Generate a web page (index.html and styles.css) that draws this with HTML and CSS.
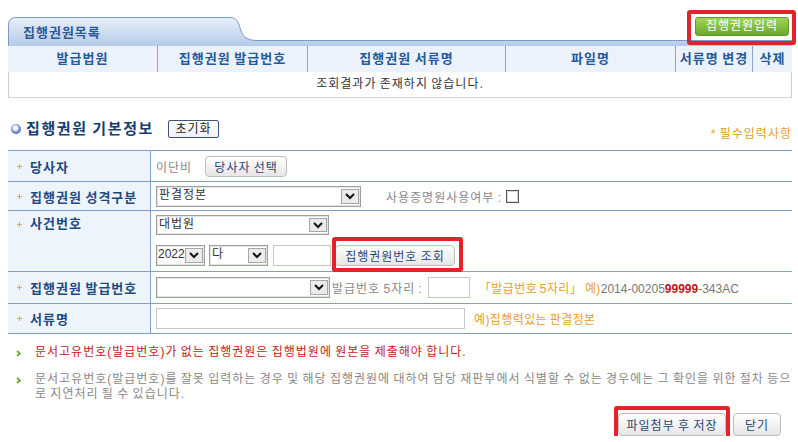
FILE: index.html
```html
<!DOCTYPE html>
<html lang="ko">
<head>
  <meta charset="UTF-8">
  <title>집행권원 입력</title>
  <link rel="stylesheet" href="styles.css">
</head>
<body>

<div class="page">

  <!-- 집행권원 목록 -->
  <div class="list-top">
    <svg class="tab-bg" width="784" height="29" viewBox="0 0 784 29">
      <defs>
        <linearGradient id="tabFill" x1="0" y1="0" x2="0" y2="1">
          <stop offset="0" stop-color="#e9f0f9"/>
          <stop offset="1" stop-color="#b4cbe8"/>
        </linearGradient>
        <linearGradient id="bandFill" x1="0" y1="0" x2="0" y2="1">
          <stop offset="0" stop-color="#a6c0e3"/>
          <stop offset="1" stop-color="#c6d8ef"/>
        </linearGradient>
      </defs>
      <rect x="0" y="23" width="784" height="6" fill="url(#bandFill)"/>
      <path d="M0.5,29 V8 Q0.5,0.5 8,0.5 H222 C230,0.5 231,8 233,14 C236,21 240,23.5 250,23.5 H784 V29 Z" fill="url(#tabFill)"/>
      <path d="M0.5,29 V8 Q0.5,0.5 8,0.5 H222 C230,0.5 231,8 233,14 C236,21 240,23.5 250,23.5 H784" fill="none" stroke="#7a9bc8"/>
    </svg>
    <h2 class="tab-title">집행권원목록</h2>
    <button class="btn-green mark">집행권원입력</button>
  </div>

  <div class="list-grid">
    <div class="th">발급법원</div>
    <div class="th">집행권원 발급번호</div>
    <div class="th">집행권원 서류명</div>
    <div class="th">파일명</div>
    <div class="th">서류명 변경</div>
    <div class="th">삭제</div>
    <div class="empty">조회결과가 존재하지 않습니다.</div>
  </div>

  <!-- 기본정보 -->
  <div class="section-head">
    <span class="dot"></span>
    <h3>집행권원 기본정보</h3>
    <button class="btn-reset">초기화</button>
    <span class="required">* 필수입력사항</span>
  </div>

  <div class="form">
    <div class="row r1">
      <div class="label"><i class="star"></i>당사자</div>
      <div class="value">
        <span class="muted">이단비</span>
        <button class="btn-light btn-party">당사자 선택</button>
      </div>
    </div>
    <div class="row r2">
      <div class="label"><i class="star"></i>집행권원 성격구분</div>
      <div class="value">
        <div class="select w205"><span>판결정본</span><b class="arrow"></b></div>
        <span class="muted use-label">사용증명원사용여부 :</span>
        <span class="check"></span>
      </div>
    </div>
    <div class="row r3">
      <div class="label"><i class="star"></i>사건번호</div>
      <div class="value stack">
        <div class="select w173 h20"><span>대법원</span><b class="arrow"></b></div>
        <div class="line">
          <div class="select w49"><span class="num">2022</span><b class="arrow"></b></div>
          <div class="select w59"><span>다</span><b class="arrow"></b></div>
          <span class="input w58"></span>
          <button class="btn-light btn-lookup mark">집행권원번호 조회</button>
        </div>
      </div>
    </div>
    <div class="row r4">
      <div class="label"><i class="star"></i>집행권원 발급번호</div>
      <div class="value">
        <div class="select w174"><span></span><b class="arrow"></b></div>
        <span class="muted five">발급번호 5자리 :</span>
        <span class="input w42"></span>
        <span class="hint">「발급번호 5자리」 예)<span class="grey num">2014-00205</span><strong class="num">99999</strong><span class="grey num">-343AC</span></span>
      </div>
    </div>
    <div class="row r5">
      <div class="label"><i class="star"></i>서류명</div>
      <div class="value">
        <span class="input w309"></span>
        <span class="hint">예)집행력있는 판결정본</span>
      </div>
    </div>
  </div>

  <ul class="notes">
    <li class="warn"><i class="arrow-bullet"></i><span>문서고유번호(발급번호)가 없는 집행권원은 집행법원에 원본을 제출해야 합니다.</span></li>
    <li><i class="arrow-bullet"></i><span>문서고유번호(발급번호)를 잘못 입력하는 경우 및 해당 집행권원에 대하여 담당 재판부에서 식별할 수 없는 경우에는 그 확인을 위한 절차 등으로 지연처리 될 수 있습니다.</span></li>
  </ul>

  <div class="actions">
    <button class="btn-light btn-save mark">파일첨부 후 저장</button>
    <button class="btn-light btn-close">닫기</button>
  </div>

</div>

</body>
</html>
```

FILE: styles.css
```css
* {
  box-sizing: border-box;
}

body {
  margin: 0;
  font-family: "Liberation Sans", "Noto Sans CJK KR", sans-serif;
  font-size: 12px;
  letter-spacing: 1px;
  word-spacing: -1px;
  color: #333;
  background: #fff;
}

button {
  font-family: inherit;
  font-size: 12px;
  letter-spacing: inherit;
  word-spacing: inherit;
  cursor: pointer;
  padding: 0;
}

.num {
  letter-spacing: 0;
}

.page {
  width: 784px;
  margin-left: 8px;
}

/* red annotation boxes */
.mark {
  position: relative;
}

.mark::after {
  content: "";
  position: absolute;
  border: 4px solid #e3222b;
  border-radius: 3px;
  pointer-events: none;
}

/* list tab */
.list-top {
  position: relative;
  height: 36px;
  margin-top: 10px;
  display: flex;
  justify-content: space-between;
  align-items: flex-end;
}

.tab-bg {
  position: absolute;
  left: 0;
  bottom: 0;
}

.tab-title {
  position: relative;
  margin: 0 0 5px 15px;
  font-size: 13px;
  line-height: 16px;
  font-weight: bold;
  color: #2a5b97;
}

.btn-green {
  width: 94px;
  height: 19px;
  margin: 0 3px 10px 0;
  border: 1px solid #5f9a28;
  border-radius: 3px;
  background: linear-gradient(#a4d45a, #6ba82b);
  color: #fff;
  line-height: 17px;
}

.btn-green::after {
  top: -8px;
  left: -9px;
  right: -8px;
  bottom: -10px;
}

.list-grid {
  display: grid;
  grid-template-columns: 150px 150px 198px 170px 77px 39px;
}

.th {
  height: 26px;
  line-height: 26px;
  text-align: center;
  background: #ebf2fb;
  border-right: 1px solid #86a5cf;
  font-size: 13px;
  font-weight: bold;
  color: #24599b;
}

.th:nth-child(6) {
  border-right: none;
}

.empty {
  grid-column: 1 / -1;
  height: 26px;
  line-height: 25px;
  text-align: center;
  border: 1px solid #d2d2d2;
  border-top: none;
}

/* section title */
.section-head {
  display: flex;
  align-items: center;
  height: 22px;
  margin: 20px 0 10px;
}

.dot {
  width: 10px;
  height: 10px;
  margin: 0 5px 0 3px;
  border-radius: 50%;
  background: radial-gradient(circle at 45% 40%, #f4f8ff 0 22%, #8aa6d8 45%, #2f55a0 80%);
}

.section-head h3 {
  margin: 0;
  font-size: 15px;
  line-height: 18px;
  letter-spacing: 1.6px;
  font-weight: bold;
  color: #173d6e;
}

.btn-reset {
  width: 51px;
  height: 18px;
  margin-left: 14px;
  border: 1px solid #3f5573;
  border-radius: 2px;
  background: linear-gradient(#fff, #eef1f5);
  color: #222;
  line-height: 15px;
}

.required {
  margin-left: auto;
  color: #e2a02c;
  padding-top: 6px;
}

/* form table */
.form {
  border-top: 1px solid #7f9fc8;
}

.row {
  display: flex;
  border-bottom: 1px solid #7f9fc8;
}

.r1 { height: 31px; }
.r2 { height: 29px; }
.r3 { height: 61px; }
.r4 { height: 32px; }
.r5 { height: 30px; }

.label {
  width: 143px;
  flex: none;
  display: flex;
  align-items: center;
  padding-left: 9px;
  background: #eef4fc;
  border-right: 1px solid #7f9fc8;
  font-size: 13px;
  font-weight: bold;
  color: #1e4a80;
}

.r3 .label {
  align-items: flex-start;
  padding-top: 4px;
  line-height: 18px;
}

.star {
  width: 5px;
  height: 5px;
  margin-right: 8px;
  background:
    linear-gradient(#e9a83a, #e9a83a) center / 5px 1px no-repeat,
    linear-gradient(#e9a83a, #e9a83a) center / 1px 5px no-repeat;
}

.r3 .star {
  margin-top: 7px;
}

.value {
  flex: 1;
  display: flex;
  align-items: center;
  padding-left: 5px;
}

.value.stack {
  flex-direction: column;
  align-items: flex-start;
  justify-content: flex-start;
  padding-top: 4px;
}

.line {
  display: flex;
  align-items: center;
  margin-top: 10px;
}

.muted {
  color: #888;
}

.grey {
  color: #777;
}

.select {
  display: flex;
  justify-content: space-between;
  height: 21px;
  padding: 1px 1px 1px 2px;
  border: 1px solid #9f9f9f;
  box-shadow: inset 0 0 0 1px #e4e4e4;
  background: #fff;
}

.select span {
  line-height: 14px;
  color: #333;
}

.select .num {
  margin-left: -1px;
}

.arrow {
  width: 18px;
  margin: 1px 0;
  border: 1px solid #a7a7a7;
  background: #ebebeb url("data:image/svg+xml,%3Csvg xmlns='http://www.w3.org/2000/svg' width='10' height='7'%3E%3Cpolyline points='1,1 5,5 9,1' fill='none' stroke='%23111' stroke-width='2'/%3E%3C/svg%3E") center no-repeat;
}

.h20 { height: 20px; }
.w205 { width: 205px; }
.w173 { width: 173px; }
.w174 { width: 174px; }
.w49 { width: 49px; }
.w59 { width: 59px; margin-left: 4px; }
.w58 { width: 58px; }
.w42 { width: 42px; }
.w309 { width: 309px; }

.input {
  height: 21px;
  border: 1px solid #c6c6c6;
  background: #fff;
}

.line .input {
  margin-left: 5px;
}

.use-label {
  margin-left: 25px;
}

.check {
  width: 13px;
  height: 13px;
  margin-left: 4px;
  border: 1px solid #555;
  box-shadow: inset 0 0 0 1px #ddd;
}

.five {
  margin: 0 5px 0 2px;
}

.hint {
  margin-left: 9px;
  letter-spacing: 0.4px;
  color: #e5a02a;
}

.hint strong {
  color: #c4121a;
}

.btn-light {
  height: 21px;
  border: 1px solid #bdbdbd;
  border-radius: 4px;
  background: linear-gradient(#fff, #e6e6e6);
  color: #1f4572;
}

.btn-party {
  width: 82px;
  margin-left: 13px;
}

.btn-lookup {
  width: 120px;
  margin-left: 4px;
}

.btn-lookup::after {
  top: -9px;
  left: -4px;
  right: -9px;
  bottom: -7px;
}

/* notes */
.notes {
  list-style: none;
  margin: 11px 0 0;
  padding: 0;
}

.notes li {
  display: flex;
  align-items: flex-start;
  line-height: 15px;
  color: #888;
}

.notes li + li {
  margin-top: 12px;
}

.notes .warn {
  color: #c41a1a;
}

.notes span {
  width: 765px;
}

.arrow-bullet {
  flex: none;
  width: 5px;
  height: 7px;
  margin: 5px 14px 0 8px;
  background: url("data:image/svg+xml,%3Csvg xmlns='http://www.w3.org/2000/svg' width='5' height='7'%3E%3Cpolyline points='1,1 4,3.5 1,6' fill='none' stroke='%2368a82a' stroke-width='1.8'/%3E%3C/svg%3E") no-repeat;
}

/* bottom buttons */
.actions {
  display: flex;
  justify-content: flex-end;
  gap: 7px;
  margin-top: 11px;
  padding-right: 11px;
}

.btn-save,
.btn-close {
  height: 23px;
}

.btn-save {
  width: 108px;
}

.btn-save::after {
  top: -8px;
  left: -5px;
  right: -5px;
  bottom: -6px;
}

.btn-close {
  width: 48px;
}
```
